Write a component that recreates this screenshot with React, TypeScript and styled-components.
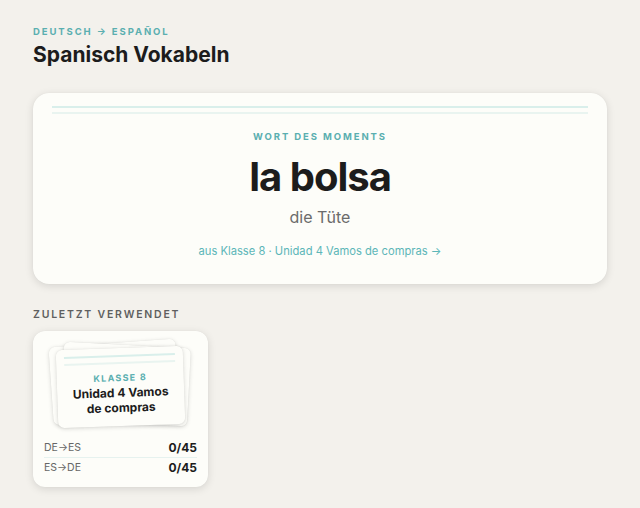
import styled, { createGlobalStyle } from "styled-components";

const GlobalStyle = createGlobalStyle`
  body {
    margin: 0;
    background: #f3f1ec;
    font-family: Inter, "Noto Sans", sans-serif;
    color: #1c1c1c;
  }
`;

const Page = styled.div`
  padding: 26px 33px 20px;
  display: flex;
  flex-direction: column;
`;

const Eyebrow = styled.div<{ $center?: boolean }>`
  font-size: 9.5px;
  font-weight: 700;
  letter-spacing: 0.2em;
  color: #5aafb0;
  text-transform: uppercase;
  text-align: ${({ $center }) => ($center ? "center" : "left")};
`;

const Title = styled.h1`
  margin: 5px 0 0;
  font-size: 21px;
  font-weight: 700;
  color: #1c1c1c;
`;

const HeroCard = styled.section`
  margin-top: 26px;
  background: #fdfdf9;
  border-radius: 16px;
  box-shadow: 0 2px 8px rgba(0, 0, 0, 0.12), 0 0 1px rgba(0, 0, 0, 0.08);
  padding: 13px 19px 26px;
  display: flex;
  flex-direction: column;
  align-items: stretch;
`;

const Rules = styled.div<{ $gap?: number }>`
  display: flex;
  flex-direction: column;
  gap: ${({ $gap }) => $gap ?? 4}px;

  > span {
    display: block;
    height: 2px;
    background: #d9efeb;
  }
  > span + span {
    background: #e9f4f0;
  }
`;

const Word = styled.div`
  margin-top: 10px;
  text-align: center;
  font-size: 40px;
  font-weight: 700;
  letter-spacing: -0.025em;
  color: #1c1c1c;
`;

const Translation = styled.div`
  margin-top: 6px;
  text-align: center;
  font-size: 16px;
  color: #6b6b6b;
`;

const SourceLink = styled.a`
  margin-top: 17px;
  text-align: center;
  font-size: 11.2px;
  color: #5cb6b8;
  text-decoration: none;
`;

const SectionLabel = styled.div`
  margin-top: 24px;
  font-size: 10.5px;
  font-weight: 600;
  letter-spacing: 0.17em;
  color: #5f5f5f;
`;

const DeckCard = styled.div`
  margin-top: 10px;
  width: 175px;
  box-sizing: border-box;
  background: #fdfdf9;
  border-radius: 12px;
  box-shadow: 0 2px 8px rgba(0, 0, 0, 0.12), 0 0 1px rgba(0, 0, 0, 0.08);
  padding: 12px 11px 10px;
`;

const Stack = styled.div`
  position: relative;
  height: 85px;
  margin: 0 10px;
`;

const Sheet = styled.div<{ $rot: number; $x: number; $y: number; $front?: boolean }>`
  position: absolute;
  left: ${({ $x }) => $x}px;
  top: ${({ $y }) => $y}px;
  width: 127px;
  height: 78px;
  box-sizing: border-box;
  background: #fdfdf9;
  border-radius: 6px;
  box-shadow: 0 1px 4px rgba(0, 0, 0, 0.14), 0 0 1px rgba(0, 0, 0, 0.1);
  transform: rotate(${({ $rot }) => $rot}deg);
  padding: 7px 8px 0;
  display: flex;
  flex-direction: column;
  align-items: center;
  z-index: ${({ $front }) => ($front ? 2 : 1)};
`;

const SheetRules = styled(Rules)`
  align-self: stretch;
`;

const DeckKicker = styled.div`
  margin-top: 8px;
  font-size: 9px;
  font-weight: 700;
  letter-spacing: 0.14em;
  color: #5aafb0;
`;

const DeckTitle = styled.div`
  margin-top: 2px;
  font-size: 12px;
  font-weight: 700;
  line-height: 15px;
  text-align: center;
  color: #1c1c1c;
`;

const Stats = styled.div`
  margin-top: 10px;
`;

const StatRow = styled.div<{ $divider?: boolean }>`
  display: flex;
  justify-content: space-between;
  align-items: center;
  height: 19px;
  border-top: ${({ $divider }) => ($divider ? "1px solid #e6f2ef" : "none")};
`;

const StatLabel = styled.span`
  font-size: 10.5px;
  color: #666;
`;

const StatValue = styled.span`
  font-size: 12px;
  font-weight: 700;
  color: #1c1c1c;
`;

export default function App() {
  return (
    <>
      <GlobalStyle />
      <Page>
        <Eyebrow>Deutsch → Español</Eyebrow>
        <Title>Spanisch Vokabeln</Title>

        <HeroCard>
          <Rules $gap={4}>
            <span />
            <span />
          </Rules>
          <Eyebrow $center style={{ marginTop: 17 }}>Wort des Moments</Eyebrow>
          <Word>la bolsa</Word>
          <Translation>die Tüte</Translation>
          <SourceLink href="#">aus Klasse 8 · Unidad 4 Vamos de compras →</SourceLink>
        </HeroCard>

        <SectionLabel>ZULETZT VERWENDET</SectionLabel>

        <DeckCard>
          <Stack>
            <Sheet $rot={-4} $x={-3} $y={0} />
            <Sheet $rot={3} $x={8} $y={2} />
            <Sheet $rot={-2} $x={3} $y={5} $front>
              <SheetRules $gap={5}>
                <span />
                <span />
              </SheetRules>
              <DeckKicker>KLASSE 8</DeckKicker>
              <DeckTitle>
                Unidad 4 Vamos
                <br />
                de compras
              </DeckTitle>
            </Sheet>
          </Stack>
          <Stats>
            <StatRow>
              <StatLabel>DE→ES</StatLabel>
              <StatValue>0/45</StatValue>
            </StatRow>
            <StatRow $divider>
              <StatLabel>ES→DE</StatLabel>
              <StatValue>0/45</StatValue>
            </StatRow>
          </Stats>
        </DeckCard>
      </Page>
    </>
  );
}
